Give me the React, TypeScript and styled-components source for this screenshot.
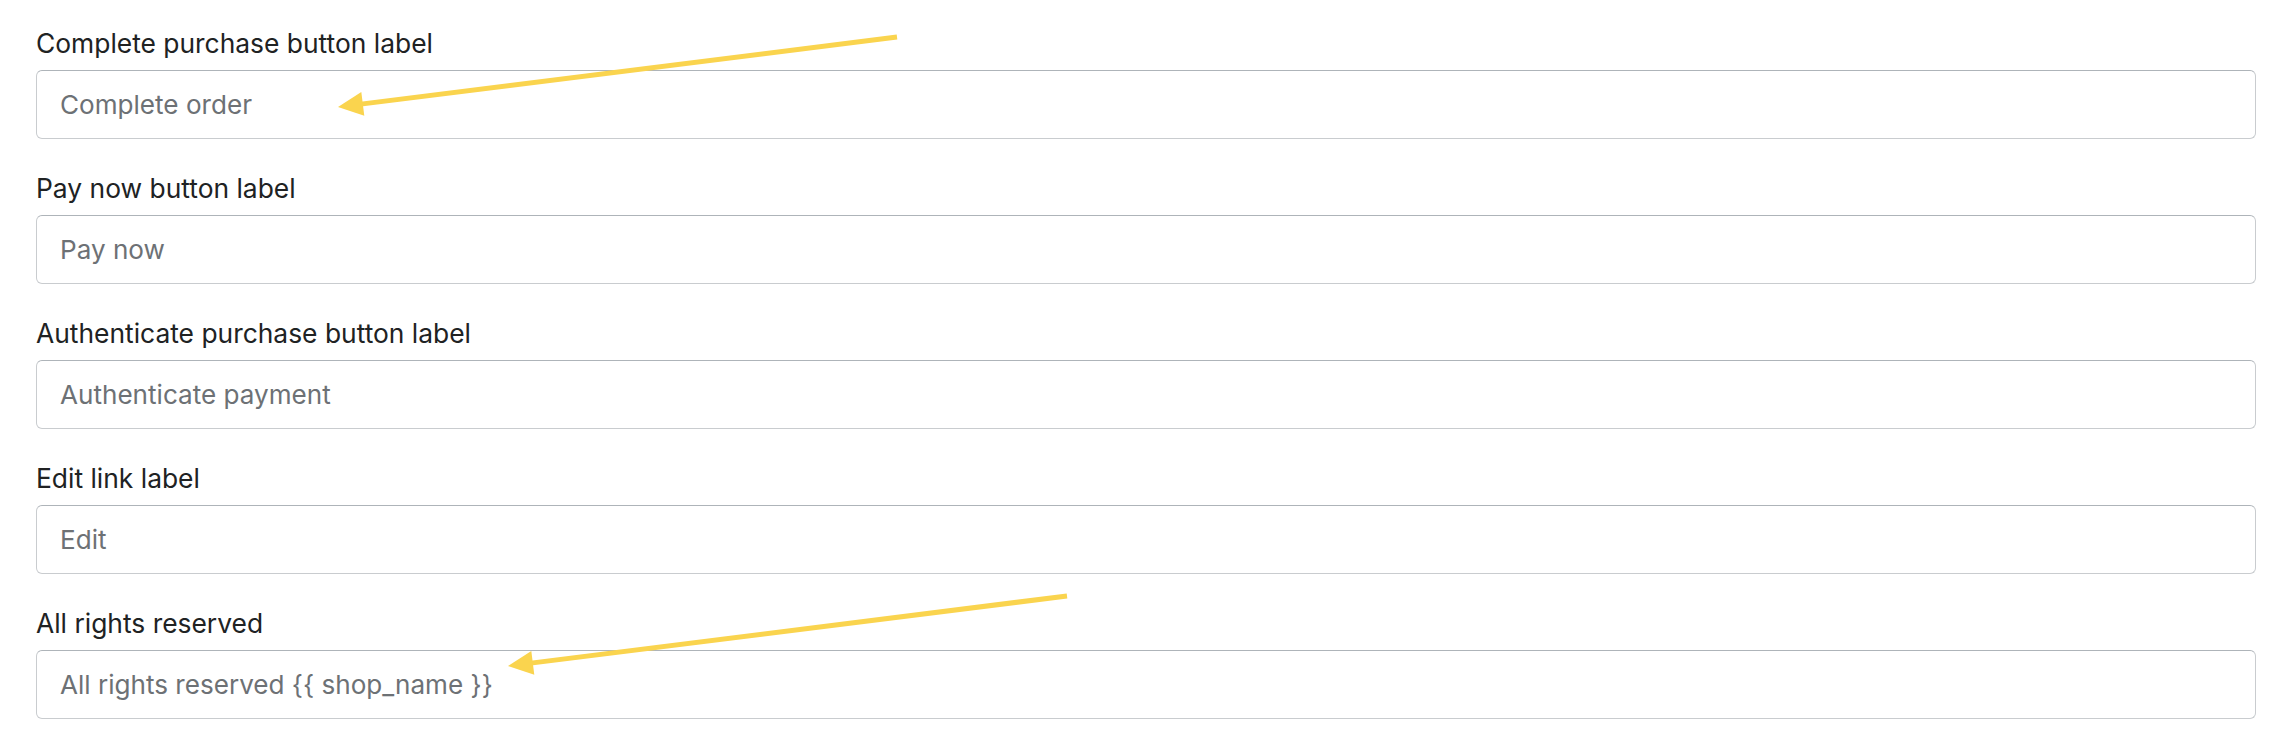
import React from "react";
import styled, { createGlobalStyle } from "styled-components";

const Global = createGlobalStyle`
  html, body { margin: 0; padding: 0; background: #ffffff; }
  body { font-family: Inter, "Noto Sans", "Liberation Sans", sans-serif; }
`;

const Page = styled.div`
  position: relative;
  width: 2292px;
  height: 748px;
  box-sizing: border-box;
  padding: 25px 36px 0 36px;
  display: flex;
  flex-direction: column;
  gap: 31px;
  overflow: hidden;
  background: #ffffff;
`;

const Field = styled.div`
  display: flex;
  flex-direction: column;
  gap: 9px;
`;

const Label = styled.label`
  font-size: 26.4px;
  line-height: 36px;
  color: #202223;
  font-weight: 400;
`;

const Input = styled.input`
  box-sizing: border-box;
  width: 100%;
  height: 69px;
  padding: 0 23px;
  border: 1px solid #c9cccf;
  border-top-color: #aeb4b9;
  border-radius: 6px;
  background-color: #ffffff;
  font-family: inherit;
  font-size: 26.1px;
  color: #202223;
  outline: none;
  appearance: none;
  &::placeholder {
    color: #6d7175;
    opacity: 1;
  }
`;

const Overlay = styled.svg`
  position: absolute;
  left: 0;
  top: 0;
  pointer-events: none;
`;

const fields = [
  { label: "Complete purchase button label", placeholder: "Complete order" },
  { label: "Pay now button label", placeholder: "Pay now" },
  { label: "Authenticate purchase button label", placeholder: "Authenticate payment" },
  { label: "Edit link label", placeholder: "Edit" },
  { label: "All rights reserved", placeholder: "All rights reserved {{ shop_name }}" },
];

const arrows = [
  { tail: [897, 37], tip: [338, 107] },
  { tail: [1067, 596], tip: [508, 666] },
];

function Arrow({ tail, tip }: { tail: number[]; tip: number[] }) {
  const dx = tip[0] - tail[0];
  const dy = tip[1] - tail[1];
  const len = Math.hypot(dx, dy);
  const ux = dx / len;
  const uy = dy / len;
  const headLen = 25;
  const half = 12;
  const bx = tip[0] - ux * headLen;
  const by = tip[1] - uy * headLen;
  const px = -uy;
  const py = ux;
  const pts = `${tip[0]},${tip[1]} ${bx + px * half},${by + py * half} ${bx - px * half},${by - py * half}`;
  return (
    <g fill="#fad44e" stroke="#fad44e">
      <line x1={tail[0]} y1={tail[1]} x2={bx + ux * 2} y2={by + uy * 2} strokeWidth={5} />
      <polygon points={pts} strokeWidth={0} />
    </g>
  );
}

export default function App() {
  return (
    <>
      <Global />
      <Page>
        {fields.map((f, i) => (
          <Field key={i}>
            <Label>{f.label}</Label>
            <Input placeholder={f.placeholder} />
          </Field>
        ))}
        <Overlay width={2292} height={748} viewBox="0 0 2292 748">
          {arrows.map((a, i) => (
            <Arrow key={i} tail={a.tail} tip={a.tip} />
          ))}
        </Overlay>
      </Page>
    </>
  );
}
